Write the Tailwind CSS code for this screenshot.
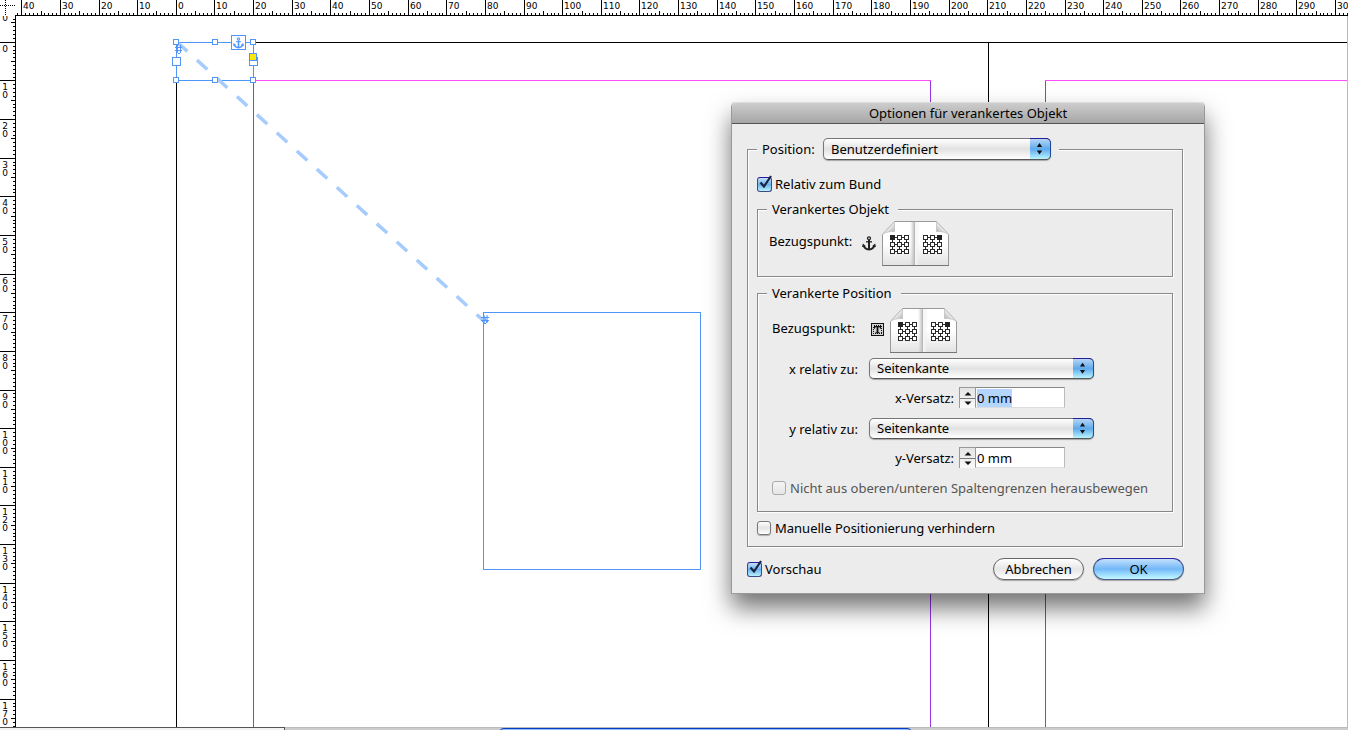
<!DOCTYPE html>
<html lang="de">
<head>
<meta charset="utf-8">
<meta name="viewport" content="width=device-width, initial-scale=1">
<title>Optionen für verankertes Objekt</title>
<script src="https://cdn.jsdelivr.net/npm/@tailwindcss/browser@4"></script>
</head>
<body class="relative flex h-screen flex-col overflow-hidden bg-white font-['Noto_Sans',sans-serif] text-[13px] leading-[18px] text-black">

<svg class="absolute size-0" aria-hidden="true">
  <defs>
    <linearGradient id="paper" x1="0" y1="0" x2="0" y2="1"><stop offset="0" stop-color="#fff"/><stop offset=".5" stop-color="#fff"/><stop offset="1" stop-color="#e2e2e2"/></linearGradient>
    <linearGradient id="fold" x1="0" y1="0" x2="1" y2="0"><stop offset="0" stop-color="#ccc" stop-opacity="0"/><stop offset=".48" stop-color="#b4b4b4"/><stop offset=".52" stop-color="#f6f6f6"/><stop offset="1" stop-color="#eee" stop-opacity="0"/></linearGradient>
    <linearGradient id="ear-l" x1="0" y1="0" x2="1" y2="1"><stop offset=".4" stop-color="#fff"/><stop offset="1" stop-color="#a0a0a0"/></linearGradient>
    <linearGradient id="ear-r" x1="1" y1="0" x2="0" y2="1"><stop offset=".4" stop-color="#fff"/><stop offset="1" stop-color="#a0a0a0"/></linearGradient>
    <symbol id="anchor" viewBox="0 0 14 15">
      <g fill="none" stroke="currentColor">
        <circle cx="7" cy="2.3" r="1.5" stroke-width="1.3"/>
        <path d="M7 4v9.500" stroke-width="2"/>
        <path d="M4 5.800h6" stroke-width="1.300"/>
        <path d="M1.600 9.600c.6 2.400 2.600 3.700 5.400 4 2.800-.3 4.800-1.600 5.400-4" stroke-width="1.900"/>
      </g>
      <path d="M0 11 .9 7.500 4 10.200zM14 11l-.9-3.500L10 10.200z" fill="currentColor"/>
    </symbol>
    <symbol id="nodes" viewBox="0 0 20 20">
      <g shape-rendering="crispEdges" stroke="#2a2a2a">
        <path d="M2.500 2.500h14v14h-14zM2.500 9.500h14M9.500 2.500v14" fill="none"/>
        <path d="M.5.5h4v4h-4zM7.500.5h4v4h-4zM14.500.5h4v4h-4zM.5 7.500h4v4h-4zM7.500 7.500h4v4h-4zM14.500 7.500h4v4h-4zM.5 14.500h4v4h-4zM7.500 14.500h4v4h-4zM14.500 14.500h4v4h-4z" fill="#fff"/>
      </g>
    </symbol>
    <symbol id="spread" viewBox="0 0 67 45">
      <path d="M.5 13.500 12.500.5h42l12 13v31H.5z" fill="url(#paper)" stroke="#999"/>
      <path d="M0 44.500h67" stroke="#777"/>
      <path d="M28 1h10v43H28z" fill="url(#fold)"/>
      <path d="M.5 13.500 12.500.5v10c-4 0-8 0-12 3z" fill="url(#ear-l)" stroke="#bbb" stroke-width=".7"/>
      <path d="M66.500 13.500 54.500.5v10c4 0 8 0 12 3z" fill="url(#ear-r)" stroke="#bbb" stroke-width=".7"/>
      <use href="#nodes" x="8" y="14" width="20" height="20"/>
      <use href="#nodes" x="41" y="14" width="20" height="20"/>
      <path d="M8 14h5v5H8zM55 14h5v5h-5z" fill="#222"/>
    </symbol>
  </defs>
</svg>

<!-- horizontal ruler -->
<header class="flex h-4 shrink-0 overflow-hidden">
  <svg id="ruler-x" class="h-4 w-full" shape-rendering="crispEdges" font-family="'DejaVu Sans', sans-serif" font-size="9" aria-label="Horizontales Lineal">
    <path d="M0 5.500h15M5.500 0v15" stroke="#000" stroke-dasharray="1 1"/>
    <path d="M15 15.500h6000" stroke="#000"/>
  </svg>
</header>

<div class="flex min-h-0 flex-1 border-r border-[#bbb]">
  <!-- vertical ruler -->
  <svg id="ruler-y" class="h-full w-4 shrink-0" shape-rendering="crispEdges" font-family="'DejaVu Sans', sans-serif" font-size="9" text-anchor="middle" aria-label="Vertikales Lineal">
    <path d="M15.500 -1v5000" stroke="#000"/>
  </svg>

  <!-- document canvas -->
  <main class="min-w-0 flex-1">
    <svg class="size-full" aria-label="Dokument">
      <g transform="translate(-16 -16)" fill="none">
        <g shape-rendering="crispEdges">
          <path d="M6000 42.500H176.500V5000M988.500 42v5000" stroke="#000"/>
          <path d="M253 80.500h678M1045 80.500h6000" stroke="#ff4dff"/>
          <path d="M253.500 81v5000M930.500 81v5000M1045.500 81v5000" stroke="#9437e8"/>
          <path d="M483.500 312.500h217v257h-217zM176.500 42.500h77v38h-77z" stroke="#4f96f8"/>
        </g>
        <path d="M177 42 485 322" stroke="#a6ccfd" stroke-width="3.500" stroke-dasharray="14 13"/>
        <g stroke="#4f96f8" stroke-width="1">
          <path d="M177.500 45v8M180.500 45v8M175 47.500h7M175 50.500h7M179 54l-2-2M179 54l2-2"/>
          <path d="M483.500 315.500 487 322M487 315v8M484 315v8M481 317.500h8M481 320.500h8M485 324l-3-3M485 324l3-3"/>
        </g>
        <g fill="#fff" stroke="#4f96f8" shape-rendering="crispEdges">
          <path d="M173.500 39.500h5v5h-5zM212.500 39.500h5v5h-5zM250.500 39.500h5v5h-5zM173.500 77.500h5v5h-5zM212.500 77.500h5v5h-5zM250.500 77.500h5v5h-5z"/>
          <path d="M172.500 57.500h8v8h-8zM249.500 57.500h8v8h-8zM231.500 35.500h14v14h-14z"/>
          <path d="M249.500 53.500h7v7h-7z" fill="#ffe600"/>
        </g>
        <use href="#anchor" x="233" y="37" width="11" height="12" class="text-[#4f96f8]"/>
      </g>
    </svg>
  </main>
</div>

<!-- status bar and scroll bar -->
<footer class="flex h-[3px] shrink-0 overflow-hidden bg-[#ccc]">
  <div class="w-[285px] border-t border-r border-[#555] bg-[#f2f2f2]"></div>
  <div class="flex-1 border-t border-[#bbb]">
    <div class="ml-[213px] h-4 w-[415px] rounded-t-md border border-[#0a3cc8] bg-[#8fc0f5]"></div>
  </div>
</footer>

<!-- dialog window -->
<section role="dialog" aria-labelledby="dialog-title" class="absolute top-[102px] left-[731px] w-[474px] rounded-t-[5px] border-x border-b border-[#999] bg-[#ececec] shadow-[0_14px_24px_0_rgba(0,0,0,0.55)]">
  <h1 id="dialog-title" class="h-[22px] rounded-t-[5px] border-t border-b border-t-[#ddd] border-b-[#555] bg-linear-to-b from-[#cdcdcd] to-[#a6a6a6] text-center leading-5">Optionen für verankertes Objekt</h1>
  <form class="px-[15px] pt-[14px] pb-[13px]" onsubmit="return false">
    <fieldset class="mr-[6px] min-w-0 border border-[#888] px-[9px] pb-[9px] shadow-[1px_1px_0_#fff,inset_1px_1px_0_#fff]">
      <legend class="bg-[#ececec] pr-2 pl-[5px]">
        <span class="flex items-center">
          <label for="position" class="w-[61px]">Position:</label>
          <span class="relative flex w-[228px]">
            <select id="position" class="h-[22px] w-full appearance-none rounded-[5px] border border-[#777] border-b-[#555] bg-linear-to-b from-white via-[#e2e2e2] to-white pl-[7px] leading-5 shadow-[0_1px_1px_rgba(0,0,0,0.3)] outline-none"><option>Benutzerdefiniert</option></select>
            <svg class="pointer-events-none absolute top-0 right-0 h-[22px] w-[21px] rounded-r-[5px] border border-l-0 border-[#1c4a9c] border-t-[#2a1a9c] border-b-[#555] bg-linear-to-b from-[#b5d6f5] via-[#5da9ec] to-[#b9f4ff]" viewBox="0 0 20 20"><path d="m9.500 4 2.700 4H6.800zM9.500 15.500l2.700-4H6.800z" fill="#111"/></svg>
          </span>
        </span>
      </legend>

      <label class="mt-[15px] flex items-center gap-[3px]">
        <span class="relative flex size-[15px]">
          <input type="checkbox" checked class="size-[15px] appearance-none rounded-[3px] border border-[#3b4a86] border-t-[#2a1a9c] bg-linear-to-b from-[#c6e0fa] via-[#6cb2ee] to-[#b9f0ff]">
          <svg class="pointer-events-none absolute -top-[2px] left-0 size-4" viewBox="0 0 16 16"><path d="M3.500 7.500 7 11.500 14 1" fill="none" stroke="#1a2440" stroke-width="2.200"/></svg>
        </span>
        Relativ zum Bund
      </label>

      <fieldset class="mt-[7px] min-w-0 border border-[#888] px-[9px] pb-[10px] shadow-[1px_1px_0_#fff,inset_1px_1px_0_#fff]">
        <legend class="bg-[#ececec] pr-[9px] pl-[5px]">Verankertes Objekt</legend>
        <div class="mt-[3px] flex items-start pl-[2px]">
          <span class="w-[93px] pt-[11px]">Bezugspunkt:</span>
          <svg class="mt-[15px] mr-[6px] h-[15px] w-[14px] text-[#222]" aria-hidden="true"><use href="#anchor"/></svg>
          <svg class="h-[45px] w-[67px]" role="img" aria-label="Bezugspunkt des verankerten Objekts"><use href="#spread"/></svg>
        </div>
      </fieldset>

      <fieldset class="mt-[7px] min-w-0 border border-[#888] px-[9px] pb-[14px] shadow-[1px_1px_0_#fff,inset_1px_1px_0_#fff]">
        <legend class="bg-[#ececec] pr-[9px] pl-[5px]">Verankerte Position</legend>
        <div class="mt-[6px] flex items-start pl-[5px]">
          <span class="w-[99px] pt-[11px]">Bezugspunkt:</span>
          <svg class="mt-[15px] mr-[6px] h-[13px] w-[13px]" viewBox="0 0 13 13" aria-hidden="true">
            <path d="M.5.5h12v12H.5z" fill="#d4d4d4" stroke="#111" shape-rendering="crispEdges"/>
            <path d="M2.500 2.500h8v8h-8z" fill="none" stroke="#111" stroke-dasharray="1 1" shape-rendering="crispEdges"/>
            <path d="M3 3h7v2.800H9.200L8.600 4.300H7.400v4.600l1.200.5v.8H4.400v-.8l1.200-.5V4.300H4.400l-.6 1.500H3z" fill="#111"/>
          </svg>
          <svg class="h-[45px] w-[67px]" role="img" aria-label="Bezugspunkt der verankerten Position"><use href="#spread"/></svg>
        </div>

        <div class="mt-[5px] flex items-center gap-[11px]">
          <label for="x-rel" class="w-[91px] text-right">x relativ zu:</label>
          <span class="relative flex w-[225px]">
            <select id="x-rel" class="h-[21px] w-full appearance-none rounded-[5px] border border-[#777] border-b-[#555] bg-linear-to-b from-white via-[#e2e2e2] to-white pl-[7px] leading-[19px] shadow-[0_1px_1px_rgba(0,0,0,0.3)] outline-none"><option>Seitenkante</option></select>
            <svg class="pointer-events-none absolute top-0 right-0 h-[21px] w-[21px] rounded-r-[5px] border border-l-0 border-[#1c4a9c] border-t-[#2a1a9c] border-b-[#555] bg-linear-to-b from-[#b5d6f5] via-[#5da9ec] to-[#b9f4ff]" viewBox="0 0 20 20"><path d="m9.500 4 2.700 4H6.800zM9.500 15.500l2.700-4H6.800z" fill="#111"/></svg>
          </span>
        </div>
        <div class="mt-2 flex items-center">
          <label for="x-off" class="mr-[5px] w-[187px] text-right">x-Versatz:</label>
          <button type="button" aria-label="x-Versatz ändern" class="h-[21px] w-4 border-t border-l border-[#999] bg-linear-to-b from-[#e4e4e4] to-[#fafafa]"><svg class="h-5 w-[15px]" viewBox="0 0 15 20"><path d="M0 10.500h15" stroke="#777"/><path d="m8 4 3.500 3.500h-7zM8 17l3.500-3.500h-7z" fill="#111"/></svg></button>
          <input id="x-off" type="text" value="0 mm" class="h-[21px] w-[90px] border border-t-[#888] border-r-[#bbb] border-b-[#ddd] border-l-[#999] bg-white pl-px leading-4 outline-none selection:bg-[#b4d5fe] selection:text-black">
        </div>
        <div class="mt-[10px] flex items-center gap-[11px]">
          <label for="y-rel" class="w-[91px] text-right">y relativ zu:</label>
          <span class="relative flex w-[225px]">
            <select id="y-rel" class="h-[21px] w-full appearance-none rounded-[5px] border border-[#777] border-b-[#555] bg-linear-to-b from-white via-[#e2e2e2] to-white pl-[7px] leading-[19px] shadow-[0_1px_1px_rgba(0,0,0,0.3)] outline-none"><option>Seitenkante</option></select>
            <svg class="pointer-events-none absolute top-0 right-0 h-[21px] w-[21px] rounded-r-[5px] border border-l-0 border-[#1c4a9c] border-t-[#2a1a9c] border-b-[#555] bg-linear-to-b from-[#b5d6f5] via-[#5da9ec] to-[#b9f4ff]" viewBox="0 0 20 20"><path d="m9.500 4 2.700 4H6.800zM9.500 15.500l2.700-4H6.800z" fill="#111"/></svg>
          </span>
        </div>
        <div class="mt-2 flex items-center">
          <label for="y-off" class="mr-[5px] w-[187px] text-right">y-Versatz:</label>
          <button type="button" aria-label="y-Versatz ändern" class="h-[21px] w-4 border-t border-l border-[#999] bg-linear-to-b from-[#e4e4e4] to-[#fafafa]"><svg class="h-5 w-[15px]" viewBox="0 0 15 20"><path d="M0 10.500h15" stroke="#777"/><path d="m8 4 3.500 3.500h-7zM8 17l3.500-3.500h-7z" fill="#111"/></svg></button>
          <input id="y-off" type="text" value="0 mm" class="h-[21px] w-[90px] border border-t-[#888] border-r-[#bbb] border-b-[#ddd] border-l-[#999] bg-white pl-px leading-4 outline-none">
        </div>
        <label class="mt-[11px] flex items-center gap-1 pl-[5px] whitespace-nowrap text-[#555]">
          <input type="checkbox" disabled class="size-[14px] appearance-none rounded-[3px] border border-[#aaa] bg-linear-to-b from-[#f4f4f4] to-[#e6e6e6]">
          Nicht aus oberen/unteren Spaltengrenzen herausbewegen
        </label>
      </fieldset>

      <label class="mt-[7px] flex items-center gap-1">
        <input type="checkbox" class="size-[14px] appearance-none rounded-[3px] border border-[#777] bg-linear-to-b from-white via-[#e4e4e4] to-white shadow-[0_1px_1px_rgba(0,0,0,0.25)]">
        Manuelle Positionierung verhindern
      </label>
    </fieldset>

    <div class="mt-[11px] flex items-center">
      <label class="flex flex-1 items-center gap-[3px]">
        <span class="relative flex size-[15px]">
          <input type="checkbox" checked class="size-[15px] appearance-none rounded-[3px] border border-[#3b4a86] border-t-[#2a1a9c] bg-linear-to-b from-[#c6e0fa] via-[#6cb2ee] to-[#b9f0ff]">
          <svg class="pointer-events-none absolute -top-[2px] left-0 size-4" viewBox="0 0 16 16"><path d="M3.500 7.500 7 11.500 14 1" fill="none" stroke="#1a2440" stroke-width="2.200"/></svg>
        </span>
        Vorschau
      </label>
      <div class="mr-[5px] flex gap-[9px]">
        <button type="button" class="h-[22px] w-[91px] rounded-full border border-[#666] bg-linear-to-b from-white via-[#e6e6e6] to-white leading-5 shadow-[0_1px_1px_rgba(0,0,0,0.3)]">Abbrechen</button>
        <button type="submit" class="h-[22px] w-[91px] rounded-full border border-[#4a5a8a] border-t-[#2f25a0] bg-linear-to-b from-[#c2e0fc] via-[#72b8f8] to-[#c4faff] leading-5 shadow-[0_1px_1px_rgba(0,0,0,0.3)]">OK</button>
      </div>
    </div>
  </form>
</section>

<script>
  const NS = 'http://www.w3.org/2000/svg';
  const PX_PER_MM = 3.864;
  const rulerX = document.getElementById('ruler-x');
  const rulerY = document.getElementById('ruler-y');

  function addPath(svg, d) {
    const p = document.createElementNS(NS, 'path');
    p.setAttribute('d', d);
    p.setAttribute('stroke', '#000');
    svg.append(p);
  }
  function addText(svg, x, y, s) {
    const t = document.createElementNS(NS, 'text');
    t.setAttribute('x', x);
    t.setAttribute('y', y);
    t.textContent = s;
    svg.append(t);
  }
  const tickStart = mm => mm % 10 === 0 ? 0 : mm % 5 === 0 ? 11 : 13;

  let d = '';
  for (let mm = -41; mm <= 303; mm++) {
    const x = Math.floor(176.3 + mm * PX_PER_MM) + 0.5;
    if (x < 16) continue;
    d += `M${x} ${tickStart(mm)}V15`;
    if (mm % 10 === 0) addText(rulerX, x + 1.5, 9, Math.abs(mm));
  }
  addPath(rulerX, d);

  d = '';
  for (let mm = -10; mm <= 177; mm++) {
    const y = Math.floor(42.3 + mm * PX_PER_MM) - 15.5;
    if (y > -1) d += `M${tickStart(mm)} ${y}H15`;
    if (mm % 10 === 0) [...String(Math.abs(mm))].forEach((c, i) => {
      const baseline = y + 9 + i * 8;
      if (baseline > 0) addText(rulerY, 5, baseline, c);
    });
  }
  addPath(rulerY, d);

  const xOff = document.getElementById('x-off');
  xOff.focus();
  xOff.select();
</script>
</body>
</html>
